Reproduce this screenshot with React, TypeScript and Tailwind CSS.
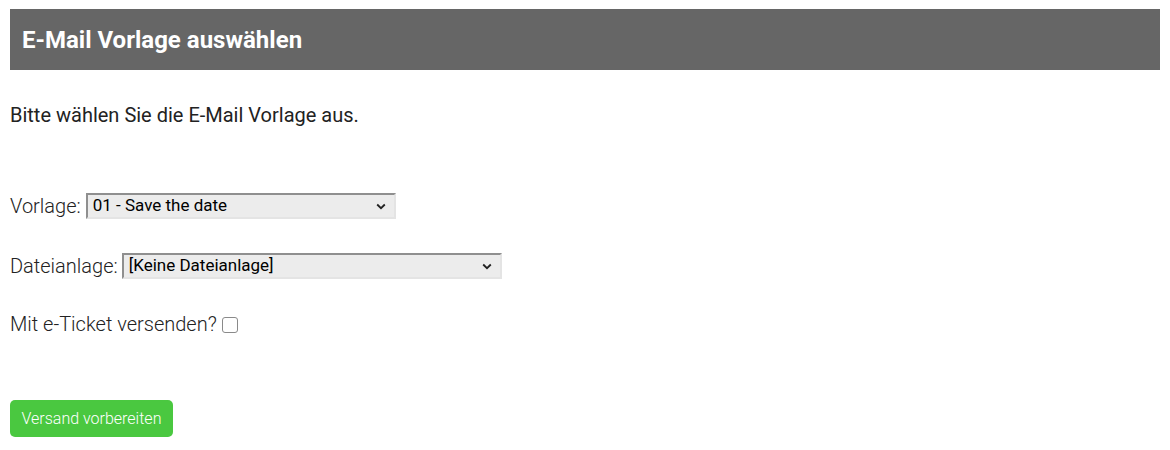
import React from "react";

function Chevron() {
  return (
    <svg width="10" height="7" viewBox="0 0 10 7" className="shrink-0">
      <path d="M1.2 1.5 L5 5.2 L8.8 1.5" fill="none" stroke="#222" strokeWidth="1.8" />
    </svg>
  );
}

function FakeSelect({ value, width }: { value: string; width: string }) {
  return (
    <div
      className={`${width} h-[26px] flex items-center justify-between pl-[5px] pr-[8px] bg-[#ececec] border-2 border-t-[#8f8f8f] border-l-[#8f8f8f] border-r-[#e4e4e4] border-b-[#e4e4e4] text-[17px] text-black`}
      style={{ fontFamily: "Roboto, 'Liberation Sans', sans-serif" }}
    >
      <span>{value}</span>
      <Chevron />
    </div>
  );
}

export default function App() {
  return (
    <div
      className="w-[1170px] h-[450px] bg-white text-[#222] overflow-hidden"
      style={{ fontFamily: "Roboto, 'Liberation Sans', sans-serif" }}
    >
      <div className="mt-[9px] mx-[10px] h-[61px] bg-[#666666] flex items-center pl-[12px]">
        <h1 className="text-[24px] font-bold text-white">E-Mail Vorlage auswählen</h1>
      </div>
      <div className="px-[10px]">
        <p className="mt-[33px] h-[24px] leading-[24px] text-[20px] text-[#222]">
          Bitte wählen Sie die E-Mail Vorlage aus.
        </p>
        <div className="mt-[66px] h-[26px] flex items-center gap-[5px]">
          <span className="text-[20px] font-light text-[#222]">Vorlage:</span>
          <FakeSelect value="01 - Save the date" width="w-[310px]" />
        </div>
        <div className="mt-[34px] h-[26px] flex items-center gap-[4px]">
          <span className="text-[20px] font-light text-[#222]">Dateianlage:</span>
          <FakeSelect value="[Keine Dateianlage]" width="w-[380px]" />
        </div>
        <div className="mt-[33px] h-[24px] flex items-center gap-[5px]">
          <span className="text-[20px] font-light text-[#222]">Mit e-Ticket versenden?</span>
          <input
            type="checkbox"
            className="appearance-none w-[16px] h-[16px] border border-[#8a8a8a] rounded-[3px] bg-white mt-[2px]"
          />
        </div>
        <button className="mt-[64px] w-[163px] h-[37px] rounded-[5px] bg-[#4ac840] text-white text-[16px] font-light">
          Versand vorbereiten
        </button>
      </div>
    </div>
  );
}
